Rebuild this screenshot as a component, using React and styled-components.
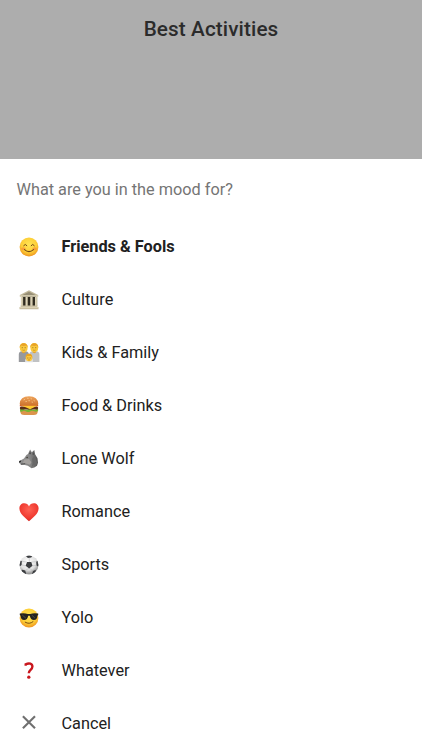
import React from "react";
import styled, { createGlobalStyle } from "styled-components";

const GlobalStyle = createGlobalStyle`
  * { box-sizing: border-box; }
  body { margin: 0; background: #fff; overflow: hidden; }
`;

const Screen = styled.div`
  width: 422px;
  height: 750px;
  overflow: hidden;
  background: #fff;
  font-family: Roboto, "Liberation Sans", sans-serif;
`;

const Header = styled.header`
  height: 159px;
  padding-top: 17px;
  background: #adadad;
  text-align: center;
`;

const Title = styled.h1`
  margin: 0;
  font-size: 20.7px;
  line-height: 24px;
  font-weight: 500;
  letter-spacing: 0.12px;
  color: #2b2b2b;
`;

const Prompt = styled.p`
  margin: 0;
  padding: 0 16.5px;
  height: 62px;
  line-height: 62px;
  font-size: 16.28px;
  color: #757575;
`;

const List = styled.ul`
  margin: 0;
  padding: 0;
  list-style: none;
`;

const Row = styled.li`
  display: flex;
  align-items: center;
  gap: 20.5px;
  height: 52.93px;
  padding-left: 17px;
`;

const Icon = styled.svg`
  flex: none;
  width: 24px;
  height: 24px;
  overflow: visible;
`;

const Label = styled.span`
  font-size: 16.3px;
  line-height: 24px;
  font-weight: ${(p) => (p.$selected ? 700 : 400)};
  color: #212121;
`;

const Face = ({ id }) => (
  <>
    <defs>
      <radialGradient id={id} cx="50%" cy="38%" r="62%">
        <stop offset="0" stopColor="#ffe555" />
        <stop offset="0.65" stopColor="#fdce36" />
        <stop offset="1" stopColor="#ee9420" />
      </radialGradient>
    </defs>
    <circle cx="12" cy="12" r="9.4" fill={`url(#${id})`} />
  </>
);

const Smile = () => (
  <>
    <Face id="smile-face" />
    <ellipse cx="6.4" cy="13.8" rx="2.2" ry="1.5" fill="#f7893b" opacity=".65" />
    <ellipse cx="17.6" cy="13.8" rx="2.2" ry="1.5" fill="#f7893b" opacity=".65" />
    <g fill="none" stroke="#714516" strokeLinecap="round">
      <path d="M6.7 10.6q1.6-2.6 3.2 0M14.1 10.6q1.6-2.6 3.2 0" strokeWidth="1" />
      <path d="M7.5 14.6q4.5 4 9 0" strokeWidth="1.1" />
    </g>
  </>
);

const Museum = () => (
  <>
    <path d="M5 8h14v10H5z" fill="#302c20" />
    <path d="M12 2.3 21.2 7v1.8H2.8V7z" fill="#c2b99b" />
    <path d="M12 3.8 18.5 7h-13z" fill="#968e75" />
    <path d="M3 8h18" stroke="#e2dac0" strokeWidth=".9" />
    <path d="M4.9 9v9M9.6 9v9M14.4 9v9M19.1 9v9" stroke="#ddd4b8" strokeWidth="2.2" />
    <path d="M5.8 9v9M10.5 9v9M15.3 9v9M20 9v9" stroke="#aaa083" strokeWidth=".5" />
    <path d="M3.6 17.5h16.8v1.4h1.1v2.3h-19v-2.3h1.1z" fill="#c8bea0" />
    <path d="M2.7 19.3h18.6" stroke="#eee6cb" strokeWidth=".6" />
  </>
);

const Parent = ({ coat }) => (
  <>
    <path d="M1.8 21v-7.6q0-3 3-3.2h3.8q3.2.2 3.2 3.2V21z" fill={coat} />
    <path d="M5 9.2h3.4v2.2L6.7 12.2 5 11.4z" fill="#e6a62c" />
    <path d="M2.8 6.5Q2.8 2 6.7 2t3.9 4.5q0 4.6-3.9 4.6T2.8 6.5z" fill="#f9c93e" />
    <path d="M2.7 6.8C2.2.6 11.2.6 10.7 6.8L9.5 4.6Q6.5 5.3 3.9 4.5z" fill="#e8a226" />
    <path d="M5.2 6.7h.1M8.1 6.7h.1" stroke="#76501a" strokeWidth=".8" strokeLinecap="round" />
    <path d="M5.4 9q1.3.6 2.6 0" fill="none" stroke="#a96816" strokeWidth=".5" />
  </>
);

const Family = () => (
  <>
    <Parent coat="#97999d" />
    <g transform="translate(10.6 0)"><Parent coat="#c0c2c4" /></g>
    <path d="M8.1 21.2v-2q0-1.8 1.8-1.8h4.2q1.8 0 1.8 1.8v2z" fill="#dfe0e2" />
    <ellipse cx="12" cy="16.7" rx="3.3" ry="3.6" fill="#fbc73c" />
    <path d="M8.7 16.9q-.2-4.2 3.3-4.2t3.3 4.2L14 15.1h-4z" fill="#eaa21e" />
    <path d="M10.8 17h.1M13.1 17h.1" stroke="#76501a" strokeWidth=".8" strokeLinecap="round" />
    <path d="M11 18.8q1 .5 2 0" fill="none" stroke="#a96816" strokeWidth=".5" />
  </>
);

const Burger = () => (
  <>
    <defs>
      <linearGradient id="bun" x1="0" y1="0" x2="0" y2="1">
        <stop stopColor="#efa45b" /><stop offset="1" stopColor="#cc722d" />
      </linearGradient>
    </defs>
    <path d="M3.3 16h17.4v1.5q0 3.6-4 3.6H7.3q-4 0-4-3.6z" fill="#db944c" />
    <path d="M3 15.2q2-1.2 4 0t4 0 4 0 4 0 2.1.1v1.8q-2 1.2-4 .2t-4 .1-4 0-4 0-2.1-.6z" fill="#76b632" />
    <rect x="2.8" y="12.5" width="18.4" height="3" rx="1.5" fill="#5c2d16" />
    <path d="M2.8 11h18.4v1.3H2.8z" fill="#d4542b" />
    <path d="M3.6 11.6h16.8l-3.7 1.8-3.6 1.9-4.5-2z" fill="#ffca2f" />
    <path d="M2.7 10Q3 2.2 12 2.2t9.3 7.8q0 1.4-1.5 1.4H4.2q-1.5 0-1.5-1.4z" fill="url(#bun)" />
    <path d="M7 5.8l.7-.3M10.5 4.3l.7.1M14 4.6l.6.3M17 6.6l.5.3M11.8 6.7h.7M8.8 7.6l.7-.1M15 8.1l.6.1" stroke="#ffe0a5" strokeWidth=".6" strokeLinecap="round" />
  </>
);

const Wolf = () => (
  <>
    <defs>
      <linearGradient id="fur">
        <stop stopColor="#929292" /><stop offset=".6" stopColor="#858585" /><stop offset="1" stopColor="#555" />
      </linearGradient>
    </defs>
    <path d="M2.4 14 7 11.4 9.4 8 11 6.9 13.1 2.4 14.8 5.2 17.3 3.1 18.2 7.4 20.5 11.2 21 15.7 20 18.8 17.3 20.6 14.5 21.2 10.8 18.8 7.8 18.1 4 18.1 3.1 16.8 2 15.7z" fill="url(#fur)" />
    <path d="M12 7 13.1 4l1 3.3M15.3 7.2l1.2-2.5.6 3.4z" fill="#4e4d4d" />
    <path d="M7.4 12.6 12 12.1l2.4 3.2-1.5 2.5-3.6-1.3-3.8.2" fill="#a4a19e" />
    <path d="M14.5 20.5l1.1-4.3-.5-4.1 2.3-3.5 2.7 7.2-1.6 3.2-1.9-1.2z" fill="#696969" />
    <path d="M2.2 14.1l2-.5-.5 1.7-1.5.4z" fill="#252525" />
    <path d="M4 17.1l4.2-.5" stroke="#343434" strokeWidth=".7" />
    <circle cx="10.1" cy="10.5" r=".65" fill="#2e291c" />
  </>
);

const Heart = () => (
  <>
    <defs>
      <radialGradient id="heart" cx="50%" cy="35%" r="70%">
        <stop stopColor="#ff6254" /><stop offset=".7" stopColor="#ef392f" /><stop offset="1" stopColor="#ce2521" />
      </radialGradient>
    </defs>
    <path d="M12 21.2C8.2 18 2.4 13.8 2.4 8.3c0-3 2-5.1 4.8-5.1 2.2 0 3.9 1.1 4.8 3.2.9-2.1 2.6-3.2 4.8-3.2 2.8 0 4.8 2.1 4.8 5.1 0 5.5-5.8 9.7-9.6 12.9z" fill="url(#heart)" />
  </>
);

const Ball = () => (
  <>
    <defs>
      <radialGradient id="ball" cx="45%" cy="35%" r="60%">
        <stop stopColor="#fff" /><stop offset=".7" stopColor="#e0e0e0" /><stop offset="1" stopColor="#999" />
      </radialGradient>
      <clipPath id="ball-edge"><circle cx="12" cy="12" r="9.4" /></clipPath>
    </defs>
    <circle cx="12" cy="12" r="9.4" fill="url(#ball)" />
    <g clipPath="url(#ball-edge)">
      <path d="M10.1 8.9l4.2.2 1.2 3.7-3.3 2.6-3.6-2.6zM8.2 2.2h7.5l-1.5 2.4-3.3.3zM2 7.3l2.8.7-.2 4-2.6 2zM22 7l-2.8 1.7.3 3.8 2.5 1.5zM5.3 16.8l2.9.8 1 3.2-2.4.4-3-3zM18.8 16.8l-2.8 1.2-1 3.2 3.3-.4z" fill="#3b3d40" />
      <path d="M12.3 5v4M5 8.2l5 1M5 12l3.6.8M8.6 17.2l3.6-2M12.2 15.2l3.6 2.5M15.4 12.8l3.6-.4M14.3 9.1l4.5-.5" stroke="#a3a6aa" strokeWidth=".4" />
    </g>
  </>
);

const Cool = () => (
  <>
    <Face id="cool-face" />
    <path d="M2.8 7.6q4.6-.9 8 .5h2.4q3.4-1.4 8-.5v1.5l-.8.6q-.2 4.2-3.5 4.2-3.4 0-4.1-4.2h-1.6q-.7 4.2-4.1 4.2-3.3 0-3.5-4.2l-.8-.6z" fill="#24231f" />
    <path d="M5.3 9.1l3.5 3M14.7 9.1l3.1 2.8" stroke="#626158" strokeWidth=".7" />
    <path d="M8.2 16.2q4.1 2.6 7.8-.5" fill="none" stroke="#7b4b14" strokeWidth="1" strokeLinecap="round" />
  </>
);

const Question = () => (
  <>
    <path d="M8.7 6.7V5.3c3.6-1.8 6.7-.6 6.7 2.3 0 3.4-3.6 3.1-3.6 6.6" fill="none" stroke="#c9171e" strokeWidth="2.4" />
    <circle cx="11.8" cy="18.2" r="1.65" fill="#c9171e" />
  </>
);

const Cross = () => (
  <path d="M5.9 4.2 18 16.3M18 4.2 5.9 16.3" fill="none" stroke="#707070" strokeWidth="2.1" />
);

const activities = [
  { label: "Friends & Fools", Art: Smile, selected: true },
  { label: "Culture", Art: Museum },
  { label: "Kids & Family", Art: Family },
  { label: "Food & Drinks", Art: Burger },
  { label: "Lone Wolf", Art: Wolf },
  { label: "Romance", Art: Heart },
  { label: "Sports", Art: Ball },
  { label: "Yolo", Art: Cool },
  { label: "Whatever", Art: Question },
  { label: "Cancel", Art: Cross },
];

export default function App() {
  return (
    <Screen>
      <GlobalStyle />
      <Header><Title>Best Activities</Title></Header>
      <Prompt>What are you in the mood for?</Prompt>
      <List>
        {activities.map(({ label, Art, selected }) => (
          <Row key={label}>
            <Icon viewBox="0 0 24 24" aria-hidden="true"><Art /></Icon>
            <Label $selected={selected}>{label}</Label>
          </Row>
        ))}
      </List>
    </Screen>
  );
}
